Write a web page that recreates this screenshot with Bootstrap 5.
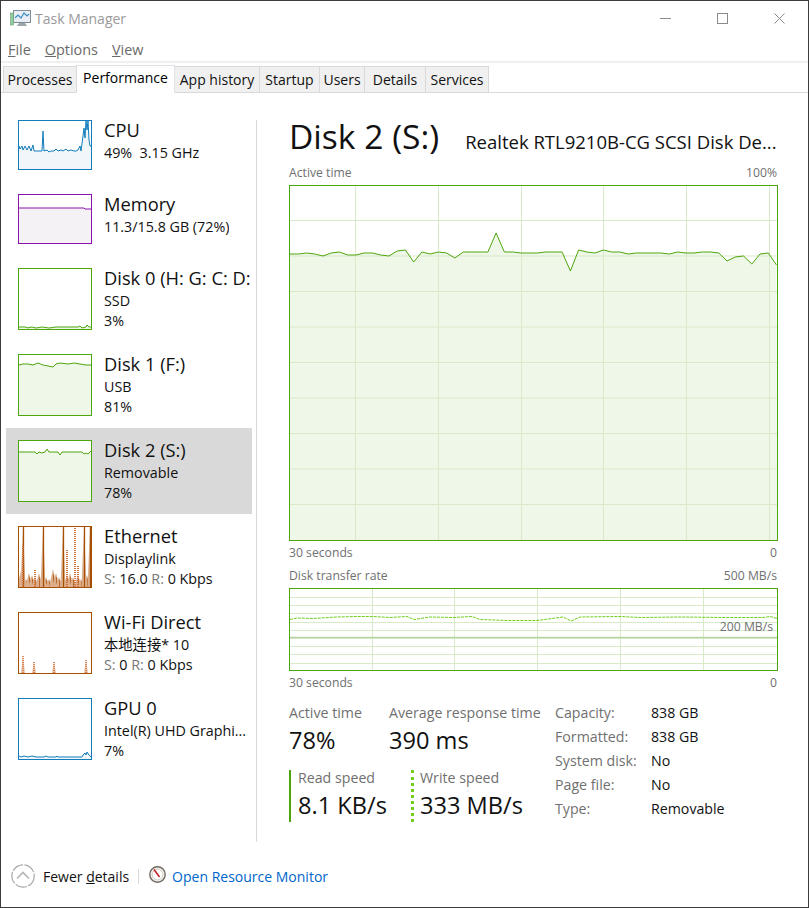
<!DOCTYPE html>
<html lang="en">
<head>
  <meta charset="UTF-8" />
  <title>Task Manager</title>
  <meta name="viewport" content="width=device-width, initial-scale=1">
  <link href="https://cdn.jsdelivr.net/npm/bootstrap@5.3.2/dist/css/bootstrap.min.css" rel="stylesheet">
  <style>
    html, body { height: 100%; }
    body { margin: 0; background: #fff; font-family: "Open Sans", "Noto Sans CJK SC", sans-serif; color: #111; overflow: hidden; }
    svg { display: block; }
    .win { height: 908px; border: 1px solid #3c3c3c; display: flex; flex-direction: column; }

    .titlebar { height: 35px; padding-left: 9px; }
    .titlebar .ttl { font-size: 14px; color: #9a9a9a; margin-left: 4px; }
    .winbtns { margin-left: auto; gap: 0; }
    .winbtns span { width: 57px; height: 35px; display: flex; align-items: center; justify-content: center; }

    .menubar { height: 25px; padding: 2px 0 0 7px; gap: 14px; font-size: 14.4px; color: #6a6a6a; }

    .tabstrip { border-top: 2px solid #f0f0f0; padding: 2px 0 0 2px; height: 30px; }
    .tabstrip .nav-tabs { border-bottom: 1px solid #d9d9d9; --bs-nav-tabs-border-width: 0; flex-wrap: nowrap; height: 28px; align-items: flex-end; margin-left: -2px; padding-left: 2px; }
    .tabstrip .nav-link { background: #f0f0f0; border: 1px solid #d9d9d9; border-left: 0; border-radius: 0; color: #111; font-size: 14px; line-height: 25px; height: 27px; padding: 0; text-align: center; margin: 0 0 -1px; }
    .tabstrip .nav-item:first-child .nav-link { border-left: 1px solid #d9d9d9; }
    .tabstrip .nav-link.active { background: #fff; height: 28px; border-bottom-color: #fff; line-height: 24px; margin-left: -1px; border-left: 1px solid #d9d9d9; }
    .tabstrip .nav-item:nth-child(1) .nav-link { width: 74px; }
    .tabstrip .nav-item:nth-child(2) .nav-link { width: 99px; }
    .tabstrip .nav-item:nth-child(3) .nav-link { width: 85px; }
    .tabstrip .nav-item:nth-child(4) .nav-link { width: 60px; }
    .tabstrip .nav-item:nth-child(5) .nav-link { width: 45px; }
    .tabstrip .nav-item:nth-child(6) .nav-link { width: 61px; }
    .tabstrip .nav-item:nth-child(7) .nav-link { width: 63px; }

    .mainarea { height: 751px; }
    .sidepane { width: 256px; padding: 17px 5px 0 5px; flex: none; position: relative; }
    .sidepane::after { content: ""; position: absolute; right: 0; top: 29px; bottom: 0; width: 1px; background: #d9d9d9; }
    .res-item { display: flex; padding: 12px 0 12px 12px; }
    .res-item.sel { background: #d9d9d9; }
    .thumb { width: 74px; flex: none; }
    .res-txt { margin: -3px 0 -3px 12px; font-size: 14.3px; line-height: 20px; white-space: nowrap; overflow: hidden; }
    .res-name { font-size: 18.3px; line-height: 26px; }
    .dim { color: #777; }

    .perfpane { padding: 27px 31px 0 32px; flex: 1; min-width: 0; }
    .perf-head { align-items: baseline; height: 40px; }
    .perf-title { font-size: 33.6px; line-height: 36px; }
    .perf-model { font-size: 18.5px; margin-left: 26px; }
    .lbl { font-size: 12.2px; color: #707070; line-height: 16px; }
    .lblrow { display: flex; justify-content: space-between; }
    .lblrow.head { margin-top: 7px; padding-bottom: 4px; }
    .bigval { font-size: 23.6px; line-height: 35px; }
    .statlbl { font-size: 14.2px; color: #707070; line-height: 20px; }
    .stats { margin-top: 12px; }
    .stat-left { width: 266px; flex: none; }
    .stat-a { width: 100px; }
    .speed { height: 52px; margin-top: 12px; border-left: 2px solid #4da60c; padding-left: 7px; width: 122px; }
    .speed.wr { border-left: 3px dotted #6fcf1a; padding-left: 6px; }
    .speed .statlbl { margin-top: -2px; }
    .props { font-size: 14.2px; line-height: 24px; margin-top: -2px; align-self: flex-start; }
    .props td { padding: 0; }
    .props td:first-child { color: #707070; width: 96px; }

    .footbar { height: 64px; padding: 4px 0 0 10px; }
    .footbar .fewer { font-size: 14px; margin-left: 8px; }
    .footbar .vsep { width: 1px; height: 15px; background: #d9d9d9; margin: 0 10px 0 9px; }
    .footbar a { color: #0066cc; text-decoration: none; font-size: 14px; margin-left: 6px; }
    .footbar .resico { margin-bottom: 3px; }
  </style>
</head>
<body>
<div class="win">
  <div class="titlebar d-flex align-items-center">
    <svg width="21" height="19" viewBox="0 0 21 19">
      <rect x="3.5" y="1.5" width="17" height="12" fill="#e8eef4" stroke="#7d8b94"/>
      <path d="M5 9 L8 6 L11 9 L14 4 L17 7 L19 5" fill="none" stroke="#3d8fc4" stroke-width="1.2"/>
      <rect x="0.5" y="4" width="3" height="12" fill="#8fcfa0" stroke="#6b9c78" stroke-width=".6"/>
      <path d="M9 14 h6 l2 3 h-10 z" fill="#9aa5ad"/>
    </svg>
    <span class="ttl">Task Manager</span>
    <div class="winbtns d-flex">
      <span><svg width="11" height="11"><path d="M0 5.5 H11" stroke="#8a8a8a"/></svg></span>
      <span><svg width="11" height="11"><rect x=".5" y=".5" width="10" height="10" fill="none" stroke="#8a8a8a"/></svg></span>
      <span><svg width="11" height="11"><path d="M.5 .5 L10.5 10.5 M10.5 .5 L.5 10.5" stroke="#8a8a8a"/></svg></span>
    </div>
  </div>

  <div class="menubar d-flex align-items-center">
    <span><u>F</u>ile</span><span><u>O</u>ptions</span><span><u>V</u>iew</span>
  </div>

  <div class="tabstrip">
    <ul class="nav nav-tabs">
      <li class="nav-item"><a class="nav-link" href="#">Processes</a></li>
      <li class="nav-item"><a class="nav-link active" href="#">Performance</a></li>
      <li class="nav-item"><a class="nav-link" href="#">App history</a></li>
      <li class="nav-item"><a class="nav-link" href="#">Startup</a></li>
      <li class="nav-item"><a class="nav-link" href="#">Users</a></li>
      <li class="nav-item"><a class="nav-link" href="#">Details</a></li>
      <li class="nav-item"><a class="nav-link" href="#">Services</a></li>
    </ul>
  </div>

  <div class="mainarea d-flex">
    <div class="sidepane">
      <div class="res-item">
        <svg class="thumb" id="tCpu" width="74" height="50"></svg>
        <div class="res-txt"><div class="res-name">CPU</div><div>49%&nbsp; 3.15 GHz</div></div>
      </div>
      <div class="res-item">
        <svg class="thumb" id="tMem" width="74" height="50"></svg>
        <div class="res-txt"><div class="res-name">Memory</div><div>11.3/15.8 GB (72%)</div></div>
      </div>
      <div class="res-item">
        <svg class="thumb" id="tD0" width="74" height="62"></svg>
        <div class="res-txt"><div class="res-name">Disk 0 (H: G: C: D:</div><div>SSD</div><div>3%</div></div>
      </div>
      <div class="res-item">
        <svg class="thumb" id="tD1" width="74" height="62"></svg>
        <div class="res-txt"><div class="res-name">Disk 1 (F:)</div><div>USB</div><div>81%</div></div>
      </div>
      <div class="res-item sel">
        <svg class="thumb" id="tD2" width="74" height="62"></svg>
        <div class="res-txt"><div class="res-name">Disk 2 (S:)</div><div>Removable</div><div>78%</div></div>
      </div>
      <div class="res-item">
        <svg class="thumb" id="tEth" width="74" height="62"></svg>
        <div class="res-txt"><div class="res-name">Ethernet</div><div>Displaylink</div><div><span class="dim">S:</span> 16.0 <span class="dim">R:</span> 0 Kbps</div></div>
      </div>
      <div class="res-item">
        <svg class="thumb" id="tWifi" width="74" height="62"></svg>
        <div class="res-txt"><div class="res-name">Wi-Fi Direct</div><div>本地连接* 10</div><div><span class="dim">S:</span> 0 <span class="dim">R:</span> 0 Kbps</div></div>
      </div>
      <div class="res-item">
        <svg class="thumb" id="tGpu" width="74" height="62"></svg>
        <div class="res-txt"><div class="res-name">GPU 0</div><div>Intel(R) UHD Graphi...</div><div>7%</div></div>
      </div>
    </div>

    <div class="perfpane">
      <div class="perf-head d-flex">
        <div class="perf-title text-nowrap">Disk 2 (S:)</div>
        <div class="perf-model text-nowrap">Realtek RTL9210B-CG SCSI Disk De...</div>
      </div>
      <div class="lblrow head lbl"><span>Active time</span><span>100%</span></div>
      <svg id="chartActive" width="489" height="356"></svg>
      <div class="lblrow lbl mt-1"><span>30 seconds</span><span>0</span></div>
      <div class="lblrow head lbl"><span>Disk transfer rate</span><span>500 MB/s</span></div>
      <svg id="chartRate" width="489" height="83"></svg>
      <div class="lblrow lbl mt-1"><span>30 seconds</span><span>0</span></div>

      <div class="stats d-flex">
        <div class="stat-left">
          <div class="d-flex">
            <div class="stat-a"><div class="statlbl">Active time</div><div class="bigval">78%</div></div>
            <div class="stat-b text-nowrap"><div class="statlbl">Average response time</div><div class="bigval">390 ms</div></div>
          </div>
          <div class="d-flex">
            <div class="speed"><div class="statlbl">Read speed</div><div class="bigval">8.1 KB/s</div></div>
            <div class="speed wr text-nowrap"><div class="statlbl">Write speed</div><div class="bigval">333 MB/s</div></div>
          </div>
        </div>
        <table class="props">
          <tr><td>Capacity:</td><td>838 GB</td></tr>
          <tr><td>Formatted:</td><td>838 GB</td></tr>
          <tr><td>System disk:</td><td>No</td></tr>
          <tr><td>Page file:</td><td>No</td></tr>
          <tr><td>Type:</td><td>Removable</td></tr>
        </table>
      </div>
    </div>
  </div>

  <div class="footbar d-flex align-items-center">
    <svg width="24" height="24" viewBox="0 0 24 24">
      <circle cx="12" cy="12" r="11.2" fill="#fff" stroke="#a8a8a8" stroke-width="1.2" stroke-dasharray="12 1.5"/>
      <path d="M6 14.5 L12 8.5 L18 14.5" fill="none" stroke="#b5b5b5" stroke-width="1.6"/>
    </svg>
    <span class="fewer">Fewer <u>d</u>etails</span>
    <span class="vsep"></span>
    <svg class="resico" width="17" height="17" viewBox="0 0 17 17">
      <circle cx="8.5" cy="8.5" r="7.7" fill="#f4f2ee" stroke="#6f6a60" stroke-width="1.4"/>
      <circle cx="8.5" cy="8.5" r="5.4" fill="#fff" stroke="#c9c4b8" stroke-width=".8"/>
      <path d="M5 3.5 L10.5 11" stroke="#c3262b" stroke-width="1.6"/>
    </svg>
    <a href="#">Open Resource Monitor</a>
  </div>
</div>

<script>
  const NS = "http://www.w3.org/2000/svg";

  function add(svg, tag, attrs) {
    const el = document.createElementNS(NS, tag);
    for (const k in attrs) el.setAttribute(k, attrs[k]);
    svg.appendChild(el);
    return el;
  }

  function pts(list) {
    return list.map(p => p[0] + "," + p[1]).join(" ");
  }

  // thumb: white ground, fill under the line, the line, then the frame
  function thumb(id, color, fill, line) {
    const svg = document.getElementById(id);
    const w = +svg.getAttribute("width"), h = +svg.getAttribute("height");
    add(svg, "rect", { width: w, height: h, fill: "#fff" });
    if (line) {
      add(svg, "polygon", { points: pts([[1, h - 1], ...line, [w - 1, h - 1]]), fill: fill });
      add(svg, "polyline", { points: pts(line), fill: "none", stroke: color, "stroke-width": 1 });
    }
    return svg;
  }

  function frame(svg, color) {
    const w = +svg.getAttribute("width"), h = +svg.getAttribute("height");
    add(svg, "rect", { x: .5, y: .5, width: w - 1, height: h - 1, fill: "none", stroke: color });
  }

  const GREEN = "#4da60c", GFILL = "#eff7e9", GGRID = "#d9eac9", ORANGE = "#a74f01";

  frame(thumb("tCpu", "#117dbb", "#f1f6fa", [[1,26],[2,29],[4,26],[5,30],[7,26],[9,30],[11,26],[13,31],[15,25],[16,31],[24,31],[25,11],[26,31],[29,30],[31,32],[33,31],[36,31],[38,29],[40,31],[43,30],[45,31],[48,29],[50,31],[53,30],[56,31],[58,31],[60,30],[62,26],[63,31],[65,16],[66,8],[67,18],[68,1],[69,10],[70,1],[71,20],[72,26],[73,26]]), "#117dbb");
  frame(thumb("tMem", "#8b12ae", "#f4f2f4", [[1,14],[66,14],[67,15],[73,15]]), "#8b12ae");
  frame(thumb("tD0", GREEN, GFILL, [[1,59],[8,59],[9,60],[14,59],[18,60],[24,59],[31,60],[38,59],[50,59],[60,59],[62,58],[64,60],[68,59],[69,57],[71,59],[73,59]]), GREEN);
  frame(thumb("tD1", GREEN, GFILL, [[1,11],[5,10],[10,10],[15,11],[20,9],[25,11],[30,12],[35,13],[38,10],[42,9],[50,10],[56,9],[62,10],[68,11],[73,11]]), GREEN);
  frame(thumb("tD2", GREEN, GFILL, [[1,12],[17,12],[19,14],[21,12],[24,13],[27,12],[29,9],[31,12],[40,12],[42,15],[44,12],[64,12],[66,14],[68,13],[70,14],[73,11]]), GREEN);

  // ethernet: tall send spikes, a lot of short pale ones, some dotted
  const eth = thumb("tEth", ORANGE, "none");
  const ethShort = [[3,16],[8,8],[11,14],[14,12],[17,10],[21,14],[28,10],[31,8],[35,18],[38,14],[41,10],[49,12],[52,14],[55,10],[60,12],[63,8],[69,12]];
  ethShort.forEach(s => {
    add(eth, "polygon", { points: `${s[0]-4},61 ${s[0]},${61-s[1]} ${s[0]+4},61`, fill: "#dcae8c" });
    add(eth, "line", { x1: s[0]+.5, y1: 61, x2: s[0]+.5, y2: 61 - s[1] * .7, stroke: "#b8682c" });
  });
  [[5,1],[25,1],[45,1],[66,1],[72,1]].forEach(s => {
    add(eth, "polygon", { points: `${s[0]-2.5},61 ${s[0]},${s[1]} ${s[0]+2.5},61`, fill: "#dcae8c" });
    add(eth, "line", { x1: s[0] + .5, y1: s[1], x2: s[0] + .5, y2: 61, stroke: ORANGE, "stroke-width": 1.3 });
  });
  [[5,42],[17,18],[49,38],[57,60],[60,22]].forEach(s => {
    add(eth, "line", { x1: s[0], y1: 61, x2: s[0], y2: 61 - s[1], stroke: "#d0703a", "stroke-width": 2, "stroke-dasharray": "1 1" });
  });
  frame(eth, ORANGE);

  const wifi = thumb("tWifi", ORANGE, "none");
  [[5,18],[16,12],[36,12],[68,13]].forEach(s => {
    add(wifi, "polygon", { points: `${s[0]-2},61 ${s[0]},${61-s[1]} ${s[0]+2},61`, fill: "#e8c4aa" });
    add(wifi, "line", { x1: s[0], y1: 61, x2: s[0], y2: 61 - s[1], stroke: "#d0703a", "stroke-width": 1.5, "stroke-dasharray": "1 1" });
  });
  frame(wifi, ORANGE);

  frame(thumb("tGpu", "#117dbb", "#f1f6fa", [[1,58],[3,59],[6,58],[10,59],[14,58],[18,59],[26,59],[28,58],[30,59],[38,59],[39,58],[40,59],[64,59],[65,57],[67,55],[68,57],[69,54],[71,57],[73,59]]), "#117dbb");

  // active time chart
  const yActive = [69,69,68,69,71,68,67,70,70,68,68,70,71,66,65,77,67,69,67,68,73,67,67,67,67,48,67,67,68,68,68,67,67,67,86,65,67,68,65,67,67,69,68,68,68,68,69,67,68,68,67,67,68,76,72,71,79,69,68,80];
  const ca = document.getElementById("chartActive");
  const aW = 489, aH = 356;
  const lineA = yActive.map((y, i) => [(1 + i * (486.5 / 59)).toFixed(1), y]);
  add(ca, "polygon", { points: pts([[1, aH - 1], ...lineA, [aW - 1, aH - 1]]), fill: GFILL });
  for (let y = 35.5; y < aH - 1; y += 35.5) add(ca, "line", { x1: 1, x2: aW - 1, y1: y, y2: y, stroke: GGRID });
  [66, 149, 232, 314, 397, 480].forEach(x => add(ca, "line", { x1: x + .5, x2: x + .5, y1: 1, y2: aH - 1, stroke: GGRID }));
  add(ca, "polyline", { points: pts(lineA), fill: "none", stroke: GREEN });
  frame(ca, GREEN);

  // transfer rate chart
  const lineRate = [[1,31.5],[8,30],[24,30.5],[48,29],[68,28.5],[84,28.5],[101,29.5],[118,28.5],[125,31.5],[141,29],[164,29.5],[183,28.5],[191,31.5],[218,32.5],[248,32.5],[274,29],[282,33],[291,29],[331,28.5],[351,29.5],[391,29],[434,29.5],[474,29.5],[481,28.5],[488,30.5]];
  const cr = document.getElementById("chartRate");
  const rW = 489, rH = 83;
  for (let y = 9; y < rH - 2; y += 8.2) {
    add(cr, "line", { x1: 1, x2: rW - 1, y1: Math.round(y) + .5, y2: Math.round(y) + .5, stroke: GGRID });
  }
  [83, 165, 248, 331, 414].forEach(x => add(cr, "line", { x1: x + .5, x2: x + .5, y1: 1, y2: rH - 1, stroke: GGRID }));
  add(cr, "line", { x1: 1, x2: rW - 1, y1: 49.5, y2: 49.5, stroke: "#b9d4a2", "stroke-width": 1.4 });
  add(cr, "polyline", { points: pts(lineRate), fill: "none", stroke: "#6fcf1a", "stroke-dasharray": "3 1" });
  frame(cr, GREEN);
  const lab = add(cr, "text", { x: 484, y: 43, "text-anchor": "end", "font-size": 12.2, fill: "#707070" });
  lab.textContent = "200 MB/s";
</script>
</body>
</html>
